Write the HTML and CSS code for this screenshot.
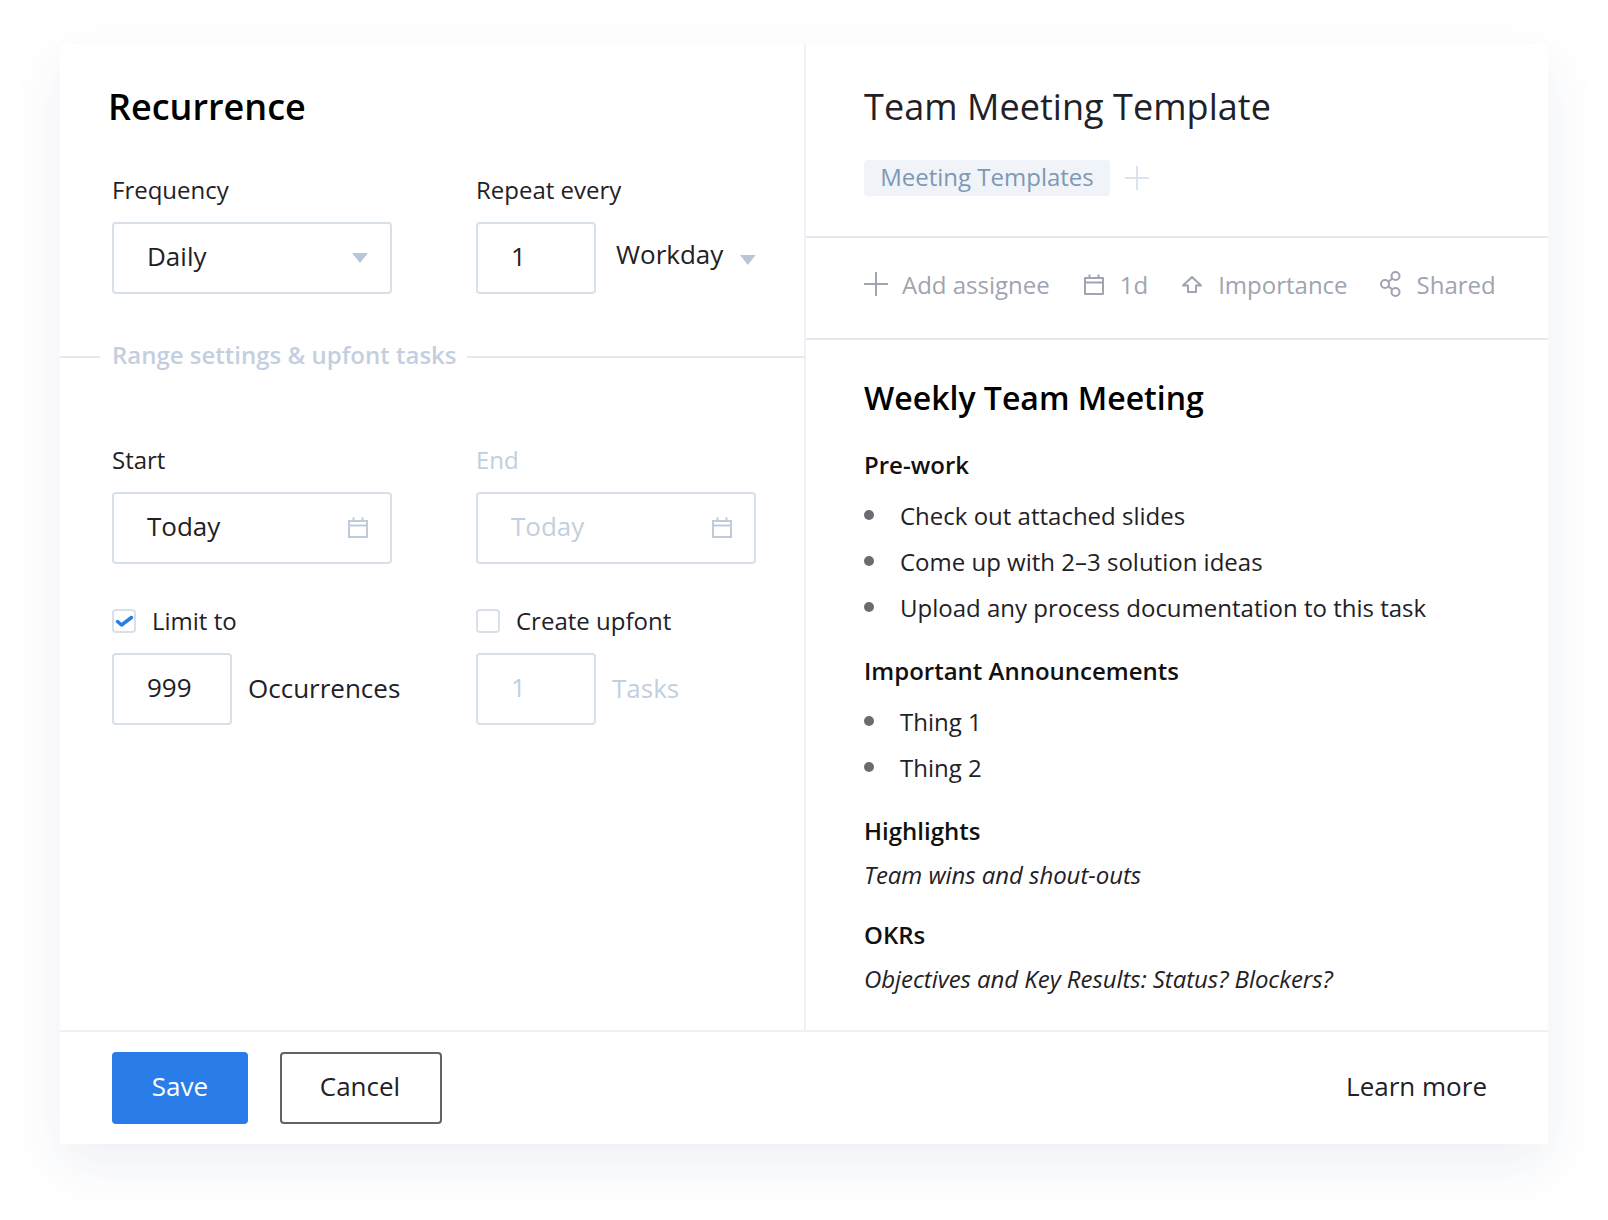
FILE: index.html
```html
<!DOCTYPE html>
<html lang="en">
<head>
<meta charset="utf-8">
<title>Recurrence</title>
<link rel="stylesheet" href="styles.css">
</head>
<body>
<main class="card">
  <div class="panes">
    <section class="left">
      <h1 class="title">Recurrence</h1>
      <div class="form-grid first-grid">
        <div class="field">
          <label class="label">Frequency</label>
          <div class="box wide select"><span>Daily</span><svg class="caret" viewBox="0 0 16 10"><path d="M0 0h16L8 10z"/></svg></div>
        </div>
        <div class="field">
          <label class="label">Repeat every</label>
          <div class="inline">
            <div class="box narrow">1</div>
            <span class="workday">Workday</span>
            <svg class="caret workday-caret" viewBox="0 0 16 10"><path d="M0 0h16L8 10z"/></svg>
          </div>
        </div>
      </div>
      <div class="range"><span class="range-line short"></span><span class="range-text">Range settings &amp; upfont tasks</span><span class="range-line"></span></div>
      <div class="form-grid second-grid">
        <div class="field">
          <label class="label">Start</label>
          <div class="box wide select"><span>Today</span>
            <svg class="cal" viewBox="0 0 20 21"><path d="M1 4h18v16H1zM1 8.500h18M5.500 0.500v3.500M14.500 0.500v3.500"/></svg></div>
        </div>
        <div class="field">
          <label class="label muted">End</label>
          <div class="box wide select muted"><span>Today</span>
            <svg class="cal" viewBox="0 0 20 21"><path d="M1 4h18v16H1zM1 8.500h18M5.500 0.500v3.500M14.500 0.500v3.500"/></svg></div>
        </div>
        <div class="field limit">
          <div class="check-row"><span class="check"><svg viewBox="0 0 20 20"><path d="M3.500 10.500l4 3.500L17.500 6.500"/></svg></span><span>Limit to</span></div>
          <div class="inline"><div class="box narrow">999</div><span class="unit">Occurrences</span></div>
        </div>
        <div class="field limit">
          <div class="check-row"><span class="check"></span><span>Create upfont</span></div>
          <div class="inline muted"><div class="box narrow">1</div><span class="unit">Tasks</span></div>
        </div>
      </div>
    </section>
    <section class="right">
      <header class="head">
        <h2 class="doc-title">Team Meeting Template</h2>
        <div class="tags"><span class="tag">Meeting Templates</span>
          <svg class="tag-plus" viewBox="0 0 24 24"><path d="M12 0v24M0 12h24"/></svg></div>
      </header>
      <div class="meta">
        <span class="meta-item first"><svg class="i-plus" viewBox="0 0 24 24"><path d="M12 0v24M0 12h24"/></svg>Add assignee</span>
        <span class="meta-item"><svg class="i-cal" viewBox="0 0 20 21"><path d="M1 4h18v16H1zM1 8.500h18M5.500 0.500v3.500M14.500 0.500v3.500"/></svg>1d</span>
        <span class="meta-item"><svg class="i-up" viewBox="0 0 20 17"><path d="M10 1L1 9.500H6V16H14V9.500H19z"/></svg>Importance</span>
        <span class="meta-item shared"><svg class="i-share" viewBox="0 0 21 26"><circle cx="15.500" cy="5" r="4"/><circle cx="5" cy="13" r="4"/><circle cx="15.500" cy="21" r="4"/><path d="M8.300 10.700l4-3.300M8.300 15.300l4 3.300"/></svg>Shared</span>
      </div>
      <article class="doc">
        <h3 class="doc-h">Weekly Team Meeting</h3>
        <h4 class="sub prework">Pre-work</h4>
        <ul class="list">
          <li>Check out attached slides</li>
          <li>Come up with 2–3 solution ideas</li>
          <li>Upload any process documentation to this task</li>
        </ul>
        <h4 class="sub">Important Announcements</h4>
        <ul class="list">
          <li>Thing 1</li>
          <li>Thing 2</li>
        </ul>
        <h4 class="sub">Highlights</h4>
        <p class="em">Team wins and shout-outs</p>
        <h4 class="sub okr">OKRs</h4>
        <p class="em em-last">Objectives and Key Results: Status? Blockers?</p>
      </article>
    </section>
  </div>
  <footer class="foot">
    <button class="btn primary">Save</button>
    <button class="btn ghost">Cancel</button>
    <span class="learn">Learn more</span>
  </footer>
</main>
</body>
</html>
```
FILE: styles.css
```css
* { box-sizing: border-box; }
html, body { margin: 0; background: #fff; }
body { font-family: "Open Sans", "Noto Sans", sans-serif; font-size: 24px; line-height: 32px; color: #1f2126; height: 1220px; overflow: hidden; padding: 44px 60px 0; }
.card { width: 1488px; height: 1100px; background: #fff; box-shadow: 0 20px 50px rgba(40, 70, 110, 0.08); display: flex; flex-direction: column; }
.panes { display: flex; height: 986px; }
.left { width: 746px; border-right: 2px solid #edf0f4; padding-top: 39px; }
.right { flex: 1; padding-top: 39px; }
.title { margin: 0 0 43px 48px; font-size: 36px; line-height: 48px; font-weight: 600; color: #000; }
.form-grid { display: grid; grid-template-columns: 280px 280px; column-gap: 84px; margin-left: 52px; }
.label { display: block; height: 32px; margin-bottom: 16px; }
.box { flex: none; height: 72px; border: 2px solid #d8e0ea; border-radius: 4px; background: #fff; display: flex; align-items: center; padding: 0 0 4px 33px; font-size: 26px; }
.wide { width: 280px; }
.narrow { width: 120px; }
.select { justify-content: space-between; padding-right: 22px; }
.select svg { position: relative; top: 2px; }
.select svg.cal { top: 1px; }
.caret { width: 16px; height: 10px; fill: #b8c6d8; }
.inline { display: flex; align-items: center; }
.workday { font-size: 26px; margin-left: 20px; position: relative; top: -4px; }
.workday-caret { margin-left: 17px; position: relative; top: 2px; }
.range { display: flex; align-items: center; height: 32px; margin-top: 47px; }
.range-line { flex: 1; height: 2px; background: #e4e9ef; }
.range-line.short { flex: none; width: 40px; }
.range-text { color: #c3cfdf; margin: 0 10px 0 12px; font-weight: 600; position: relative; top: -2px; }
.second-grid { margin-top: 71px; }
.muted, .muted .box { color: #c3cfdd; }
.cal { width: 20px; height: 21px; fill: none; stroke: #bfcbda; stroke-width: 2; }
.limit { margin-top: 41px; }
.check-row { display: flex; align-items: center; height: 32px; margin-bottom: 16px; }
.check { width: 24px; height: 24px; margin-right: 16px; border: 2px solid #d8e0ea; border-radius: 4px; background: #fff; display: block; }
.check svg { display: block; width: 20px; height: 20px; fill: none; stroke: #2a7de9; stroke-width: 3.500; stroke-linecap: round; stroke-linejoin: round; }
.unit { margin-left: 16px; font-size: 26px; position: relative; top: -1px; }
.muted .unit { color: #c3cfdd; }
.head { padding: 0 0 40px 58px; border-bottom: 2px solid #e4e9ef; }
.doc-title { margin: 0 0 29px; font-size: 36px; line-height: 48px; font-weight: 400; color: #1f2126; letter-spacing: 0.05px; }
.tags { display: flex; align-items: center; height: 36px; }
.tag { height: 36px; width: 246px; border-radius: 4px; background: #f0f3f7; color: #7e98b6; text-align: center; font-size: 24px; line-height: 34px; }
.tag-plus { width: 24px; height: 24px; margin-left: 15px; fill: none; stroke: #dbe3ee; stroke-width: 2; }
.meta { display: flex; align-items: center; height: 102px; padding: 0 0 6px 58px; border-bottom: 2px solid #e4e9ef; color: #a0a4b0; font-size: 24px; }
.meta-item { display: flex; align-items: center; margin-left: 34px; }
.meta-item.first { margin-left: 0; }
.meta-item.shared { margin-left: 32px; }
.meta svg { fill: none; stroke: #a0a4b0; stroke-width: 2; stroke-linejoin: round; margin-right: 16px; position: relative; top: -1px; }
.i-plus { width: 24px; height: 24px; margin-right: 14px !important; }
.i-cal { width: 20px; height: 21px; }
.i-up { width: 20px; height: 17px; }
.i-share { width: 21px; height: 26px; }
.doc { padding: 36px 0 0 58px; }
.doc-h { margin: 0 0 29px; font-size: 32px; line-height: 44px; font-weight: 600; color: #000; }
.sub { margin: 31px 0 0; font-size: 24px; line-height: 32px; font-weight: 600; color: #111; }
.sub.prework { margin-top: 29px; }
.sub.okr { margin-top: 28px; }
.list { list-style: none; margin: 19px 0 0; padding: 0; display: flex; flex-direction: column; gap: 14px; }
.list li { position: relative; padding-left: 36px; height: 32px; }
.list li::before { content: ""; position: absolute; left: 0; top: 10px; width: 10px; height: 10px; border-radius: 50%; background: #6a6c72; }
.em { margin: 12px 0 0; font-style: italic; color: #1f2126; letter-spacing: -0.05px; }
.foot { display: flex; align-items: center; height: 114px; border-top: 2px solid #edf0f4; padding: 0 61px 0 52px; }
.btn { height: 72px; font: inherit; font-size: 26px; border-radius: 4px; padding: 0 0 4px; }
.primary { width: 136px; background: #2a7de9; border: 0; color: #fff; }
.ghost { width: 162px; margin-left: 32px; background: #fff; border: 2px solid #626366; color: #1f2126; padding-right: 2px; }
.learn { margin-left: auto; font-size: 26px; position: relative; top: -2px; }
```
